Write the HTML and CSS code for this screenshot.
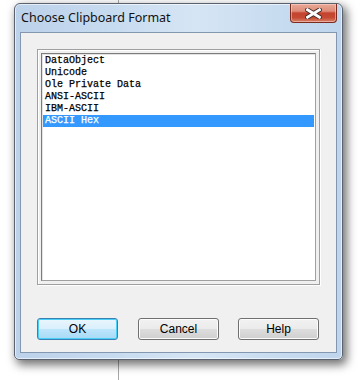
FILE: index.html
```html
<!DOCTYPE html>
<html>
<head>
<meta charset="utf-8">
<link rel="stylesheet" href="styles.css">
</head>
<body>
<div class="desk">
  <div class="window">
    <div class="titlebar">
      <span class="title">Choose Clipboard Format</span>
      <button class="close" aria-label="Close">
        <svg width="17" height="11" viewBox="0 0 17 11">
          <path d="M2.5 1.8 L14.5 9.2 M14.5 1.8 L2.5 9.2" stroke="#3c2a26" stroke-width="4.6" stroke-linecap="square"/>
          <path d="M2.5 1.8 L14.5 9.2 M14.5 1.8 L2.5 9.2" stroke="#ffffff" stroke-width="2.8" stroke-linecap="square"/>
        </svg>
      </button>
    </div>
    <div class="client">
      <div class="frame">
        <ul class="listbox">
          <li>DataObject</li>
          <li>Unicode</li>
          <li>Ole Private Data</li>
          <li>ANSI-ASCII</li>
          <li>IBM-ASCII</li>
          <li class="selected">ASCII Hex</li>
        </ul>
      </div>
      <div class="buttons">
        <button class="btn default">OK</button>
        <button class="btn cancel">Cancel</button>
        <button class="btn">Help</button>
      </div>
    </div>
  </div>
</div>
</body>
</html>
```
FILE: styles.css
```css
html, body {
  margin: 0;
  padding: 0;
  background: #ffffff;
}
.desk {
  width: 364px;
  height: 380px;
  padding: 3px 0 0 14px;
  box-sizing: border-box;
  background: linear-gradient(to right, transparent 118px, #a8a8a8 118px, #a8a8a8 119px, transparent 119px);
}
.window {
  width: 329px;
  height: 357px;
  box-sizing: border-box;
  border: 1px solid #5a6270;
  border-radius: 6px 6px 5px 5px;
  background: linear-gradient(to right, #bcd2ea 0%, #c7dbf0 30%, #d6e5f4 55%, #c8dcf0 80%, #bfd5ec 100%);
  box-shadow: 3px 4px 10px 1px rgba(0,0,0,0.55), inset 0 0 0 1px rgba(255,255,255,0.6);
  padding: 0 5px 6px 5px;
  display: flex;
  flex-direction: column;
}
.titlebar {
  height: 28px;
  display: flex;
  align-items: flex-start;
}
.title {
  font-family: "Noto Sans", "Open Sans", sans-serif;
  font-size: 12.5px;
  color: #111111;
  margin: 6px 0 0 1px;
  line-height: 16px;
}
.close {
  margin-left: auto;
  width: 47px;
  height: 19px;
  padding: 0;
  border: 1px solid #7a2b20;
  border-top: none;
  border-radius: 0 0 4px 4px;
  background: linear-gradient(to bottom, #e9a897 0%, #dd8c78 40%, #c4432e 50%, #c64a33 75%, #d98068 100%);
  box-shadow: inset 0 0 0 1px rgba(255,220,210,0.5);
  display: flex;
  align-items: center;
  justify-content: center;
}
.client {
  flex: 1;
  border: 1px solid #8398b0;
  background: #f0f0f0;
  display: flex;
  flex-direction: column;
}
.frame {
  margin: 16px 16px 0 16px;
  height: 236px;
  box-sizing: border-box;
  border: 1px solid #a0a0a0;
  box-shadow: 1px 1px 0 #ffffff, inset 1px 1px 0 #ffffff;
  padding: 3px;
  display: flex;
}
.listbox {
  flex: 1;
  margin: 0;
  padding: 1px;
  list-style: none;
  background: #ffffff;
  border: 1px solid #7c7c7c;
  border-right-color: #a0a0a0;
  border-bottom-color: #a0a0a0;
  box-shadow: inset 1px 1px 0 #e3e3e3;
  font-family: "Liberation Mono", monospace;
  font-size: 10px;
  font-weight: normal;
  color: #000000;
}
.listbox li {
  height: 12px;
  line-height: 12px;
  padding-left: 2px;
  white-space: pre;
  -webkit-text-stroke: 0.25px #000000;
}
.listbox li.selected {
  background: #3399ff;
  color: #ffffff;
  -webkit-text-stroke: 0.25px #ffffff;
}
.buttons {
  margin: 33px 0 0 16px;
  display: flex;
  gap: 20px;
}
.btn {
  width: 81px;
  height: 22px;
  padding: 0;
  box-sizing: border-box;
  border: 1px solid #707070;
  border-radius: 3px;
  background: linear-gradient(to bottom, #f2f2f2 0%, #ebebeb 50%, #dddddd 51%, #cfcfcf 100%);
  box-shadow: inset 0 0 0 1px #fcfcfc;
  font-family: "Liberation Sans", sans-serif;
  font-size: 12px;
  color: #000000;
}
.btn.cancel {
  margin-right: -1px;
}
.btn.default {
  border-color: #3c7fb1;
  background: linear-gradient(to bottom, #eaf6fd 0%, #d9f0fc 50%, #bee6fd 51%, #a7d9f5 100%);
  box-shadow: inset 0 0 0 1px #48d0f8;
}
```
